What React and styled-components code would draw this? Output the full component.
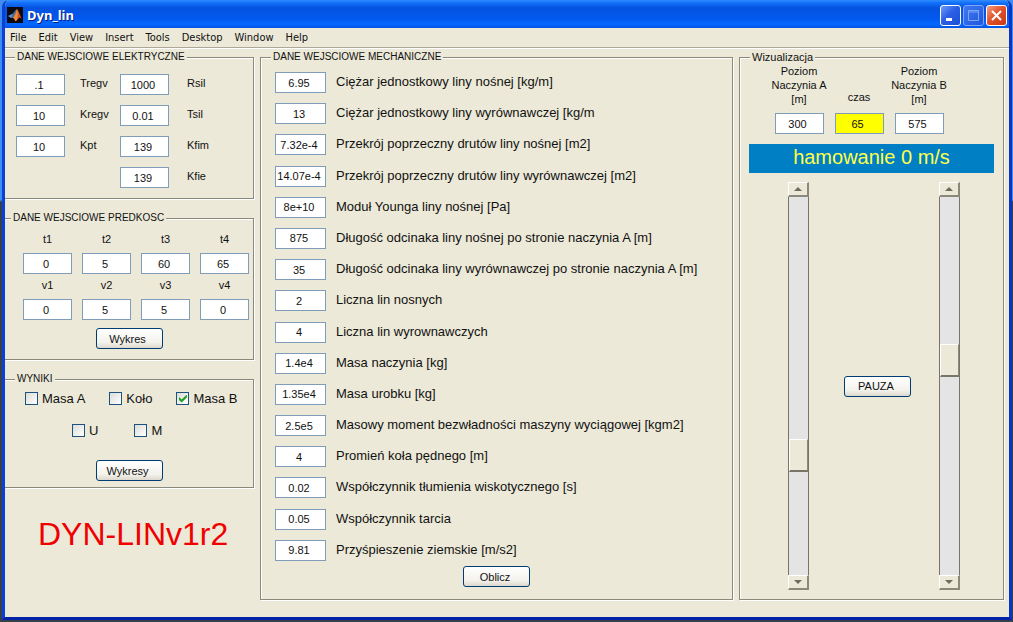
import { useState } from "react";
import styled, { createGlobalStyle, css } from "styled-components";

const GlobalStyle = createGlobalStyle`
  *,
  *::before,
  *::after {
    box-sizing: border-box;
  }

  body {
    margin: 0;
    font-family: "Liberation Sans", Arial, sans-serif;
    font-size: 11px;
    color: #111;
  }

  button,
  input {
    font: inherit;
    color: inherit;
  }
`;

const Desktop = styled.div`
  min-height: 100vh;
  display: flex;
  padding: 0 1px 2px 2px;
  background: linear-gradient(to bottom, #3f8df0 0, #3f8df0 200px, #35404a 202px);
`;

const Window = styled.main`
  flex: 1;
  min-width: 0;
  display: flex;
  flex-direction: column;
  border: solid #0a3fd8;
  border-width: 0 3px 3px;
  border-bottom-color: #0322a8;
  border-right-color: #0a34c4;
  border-radius: 7px 7px 0 0;
  background-color: #ece9d8;
  overflow: hidden;
`;

/* title bar */
const TitleBar = styled.header`
  display: flex;
  align-items: center;
  gap: 4px;
  height: 28px;
  padding: 2px 3px 0;
  margin: 0 -1px;
  color: #fff;
  background: linear-gradient(
    to bottom,
    #2f8cff 0,
    #1270f8 3px,
    #0553e0 8px,
    #0258ee 18px,
    #0468fd 24px,
    #0354e6 28px
  );
`;

const Title = styled.h1`
  flex: 1;
  margin: 0;
  font: bold 13px/16px "Noto Sans", "Open Sans", sans-serif;
  text-shadow: 1px 1px #0a1f7c;
`;

const CaptionButtons = styled.div`
  display: flex;
  gap: 2px;
`;

const CaptionButton = styled.button`
  display: grid;
  place-items: center;
  width: 21px;
  height: 21px;
  padding: 0;
  border: 1px solid #fff;
  border-radius: 3px;
  background: linear-gradient(135deg, #6f9cf8, #2a5fe6 45%, #1c4fd6);

  ${(props) =>
    props.$kind === "close" &&
    css`
      background: linear-gradient(135deg, #f2a183, #e1532c 45%, #c93a14);
    `}

  &:disabled {
    border-color: #7fa5f5;
    background: linear-gradient(135deg, #3f78f0, #1f58e2);
  }
`;

/* menu */
const MenuBar = styled.nav`
  display: flex;
  gap: 12px;
  height: 20px;
  padding: 0 5px;
  border-bottom: 1px solid #aca899;
  box-shadow: 0 1px #fff;
`;

const MenuItem = styled.button`
  padding: 0;
  border: 0;
  background: none;
  font: 11px/18px "DejaVu Sans Condensed", "DejaVu Sans", sans-serif;
`;

/* panels */
const Content = styled.div`
  flex: 1;
  display: grid;
  grid-template-columns: 249fr 473fr 265fr;
  gap: 6px;
  padding: 3px 5px 17px 0;
`;

const Column = styled.div`
  display: flex;
  flex-direction: column;
  gap: 13px;
  min-width: 0;
`;

const Panel = styled.fieldset`
  display: flex;
  flex-direction: column;
  min-width: 0;
  margin: 0;
  padding: ${(props) => props.$padding};
  border: 1px solid #8b887c;
  border-left-width: ${(props) => (props.$openLeft ? "0" : "1px")};
  box-shadow:
    inset ${(props) => (props.$openLeft ? "0" : "1px")} 1px #fff,
    1px 1px #fff;
`;

const Legend = styled.legend`
  margin-left: ${(props) => props.$shift || 0};
  padding: 0 2px;
  font-size: ${(props) => (props.$large ? "11px" : "10px")};
  line-height: 12px;
  background-color: #ece9d8;
`;

/* controls */
const TextBox = styled.input`
  width: ${(props) => (props.$wide ? "51px" : "49px")};
  height: 21px;
  flex-shrink: 0;
  padding: 0 3px 0 0;
  border: 1px solid #7f9db9;
  border-radius: 0;
  background-color: ${(props) => (props.$highlight ? "#ffff00" : "#fff")};
  text-align: center;
`;

const PushButton = styled.button`
  width: 67px;
  height: 21px;
  padding: 0 3px 0 0;
  border: 1px solid #003c74;
  border-radius: 3px;
  background: linear-gradient(to bottom, #fff, #f3f2ec 70%, #dcd8cc);
  align-self: center;
  justify-self: end;
`;

const FieldColumns = styled.div`
  display: flex;
  gap: 11px;
`;

const FieldColumn = styled.div`
  display: flex;
  flex-direction: column;
  gap: 10px;
`;

const SideField = styled.label`
  display: grid;
  grid-template-columns: 49px 29px;
  column-gap: ${(props) => props.$gap};
  line-height: 19px;
`;

const SpeedGrid = styled.div`
  display: grid;
  grid-template-columns: repeat(4, 49px);
  gap: 4px 10px;
  padding-left: 18px;
  margin-bottom: 8px;
`;

const TopField = styled.label`
  display: flex;
  flex-direction: column;
  justify-content: flex-end;
  align-items: center;
  gap: ${(props) => props.$gap || "7px"};
  line-height: 14px;
  text-align: center;
`;

const MechList = styled.div`
  flex: 1;
  display: flex;
  flex-direction: column;
  justify-content: space-between;
  padding-left: 14px;
  margin-bottom: 5px;
`;

const MechField = styled.label`
  display: flex;
  gap: 10px;
  font-size: 13px;
  line-height: 19px;
  white-space: nowrap;

  input {
    font-size: 11px;
  }
`;

const CheckRow = styled.div`
  display: flex;
  gap: ${(props) => props.$gap};
  padding-left: ${(props) => props.$inset};
  margin-bottom: 18px;

  &:last-of-type {
    margin-bottom: 22px;
  }
`;

const CheckLabel = styled.label`
  display: flex;
  gap: 4px;
  font-size: 13px;
  line-height: 14px;
`;

const CheckInput = styled.input`
  appearance: none;
  display: grid;
  place-items: center;
  width: 13px;
  height: 13px;
  margin: 0;
  border: 1px solid #1c5180;
  background: linear-gradient(135deg, #dcdcd7, #fff);

  &:checked::before {
    content: "";
    width: 9px;
    height: 8px;
    background-color: #21a121;
    clip-path: polygon(6% 32%, 36% 62%, 94% 0, 94% 36%, 36% 100%, 6% 68%);
  }
`;

const Version = styled.h2`
  margin: 0;
  padding: 14px 0 0 33px;
  font-size: 32px;
  font-weight: 400;
  line-height: 38px;
  color: #f00000;
  white-space: nowrap;
`;

/* visualisation */
const Readouts = styled.div`
  display: grid;
  grid-template-columns: repeat(3, 60px);
  padding-left: 29px;
`;

const Banner = styled.output`
  margin: 10px 9px 9px;
  font-size: 20px;
  line-height: 27px;
  height: 29px;
  text-align: center;
  color: #ffff4a;
  background-color: #007fc4;
`;

const Shaft = styled.div`
  flex: 1;
  display: grid;
  grid-template-columns: 21px 1fr 21px;
  column-gap: 28px;
  padding: 0 43px 0 48px;
`;

const ScrollBar = styled.div`
  display: flex;
  flex-direction: column;
`;

const ArrowButton = styled.button`
  display: grid;
  place-items: center;
  height: 15px;
  padding: 0;
  border: solid;
  border-width: 1px 2px 2px 1px;
  border-color: #fff #8b887c #8b887c #fff;
  background-color: #ece9d8;
`;

const Range = styled.input.attrs({ type: "range", min: 0, max: 1000 })`
  appearance: none;
  writing-mode: vertical-lr;
  direction: rtl;
  flex: 1;
  width: 21px;
  min-height: 0;
  margin: 0;
  border: solid #77746a;
  border-width: 0 1px;
  background-color: #e5e4e4;

  &::-webkit-slider-thumb {
    appearance: none;
    width: 19px;
    height: 33px;
    border: solid;
    border-width: 1px 1px 2px 1px;
    border-color: #fff #8b887c #77746a #fff;
    background-color: #ece9d8;
  }
`;

const menus = ["File", "Edit", "View", "Insert", "Tools", "Desktop", "Window", "Help"];

const regulator = [
  ["Tregv", ".1"],
  ["Kregv", "10"],
  ["Kpt", "10"],
];

const motor = [
  ["Rsil", "1000"],
  ["Tsil", "0.01"],
  ["Kfim", "139"],
  ["Kfie", "139"],
];

const speed = [
  ["t1", "0"],
  ["t2", "5"],
  ["t3", "60"],
  ["t4", "65"],
  ["v1", "0"],
  ["v2", "5"],
  ["v3", "5"],
  ["v4", "0"],
];

const mechanical = [
  ["Ciężar jednostkowy liny nośnej [kg/m]", "6.95"],
  ["Ciężar jednostkowy liny wyrównawczej [kg/m", "13"],
  ["Przekrój poprzeczny drutów liny nośnej [m2]", "7.32e-4"],
  ["Przekrój poprzeczny drutów liny wyrównawczej [m2]", "14.07e-4"],
  ["Moduł Younga liny nośnej [Pa]", "8e+10"],
  ["Długość odcinaka liny nośnej po stronie naczynia A [m]", "875"],
  ["Długość odcinaka liny wyrównawczej po stronie naczynia A [m]", "35"],
  ["Liczna lin nosnych", "2"],
  ["Liczna lin wyrownawczych", "4"],
  ["Masa naczynia [kg]", "1.4e4"],
  ["Masa urobku [kg]", "1.35e4"],
  ["Masowy moment bezwładności maszyny wyciągowej [kgm2]", "2.5e5"],
  ["Promień koła pędnego [m]", "4"],
  ["Współczynnik tłumienia wiskotycznego [s]", "0.02"],
  ["Współczynnik tarcia", "0.05"],
  ["Przyśpieszenie ziemskie [m/s2]", "9.81"],
];

function MatlabIcon() {
  return (
    <svg width="16" height="16" viewBox="0 0 16 16" aria-hidden="true">
      <rect width="16" height="16" fill="#0b0a10" />
      <path d="M1 9 L5 7 L7 9 L4 11 Z" fill="#5d9bc9" />
      <path d="M5 7 C7 6 8 3 10 2 L8 9 L6 11 L4 11 Z" fill="#4a6f9c" />
      <path d="M10 2 C12 4 13 9 15 12 C13 10 12 10 11 12 C10 13 9 14 8 14 C8 12 7 11 6 11 C8 9 9 5 10 2 Z" fill="#d9541e" />
      <path d="M10 2 C11 6 11 9 10 13 C9 14 8 14 8 14 C8 12 7 11 6 11 C8 9 9 5 10 2 Z" fill="#ee8a3a" />
    </svg>
  );
}

function Check({ label, defaultChecked }) {
  return (
    <CheckLabel>
      <CheckInput type="checkbox" defaultChecked={defaultChecked} />
      {label}
    </CheckLabel>
  );
}

function SideFields({ fields, gap }) {
  return (
    <FieldColumn>
      {fields.map(([label, value]) => (
        <SideField key={label} $gap={gap}>
          <TextBox defaultValue={value} />
          {label}
        </SideField>
      ))}
    </FieldColumn>
  );
}

function VesselSlider({ label, value, onChange }) {
  return (
    <ScrollBar>
      <ArrowButton aria-label={`${label} +`} onClick={() => onChange(Math.min(1000, value + 10))}>
        <svg width="8" height="4" viewBox="0 0 8 4">
          <path d="M0 4 L4 0 L8 4 Z" fill="#6e6b60" />
        </svg>
      </ArrowButton>
      <Range aria-label={label} value={value} onChange={(e) => onChange(Number(e.target.value))} />
      <ArrowButton aria-label={`${label} -`} onClick={() => onChange(Math.max(0, value - 10))}>
        <svg width="8" height="4" viewBox="0 0 8 4">
          <path d="M0 0 L8 0 L4 4 Z" fill="#6e6b60" />
        </svg>
      </ArrowButton>
    </ScrollBar>
  );
}

function Visualisation() {
  const [levelA, setLevelA] = useState(300);
  const [levelB, setLevelB] = useState(575);

  return (
    <Panel $padding="1px 0 9px">
      <Legend $large $shift="10px">
        Wizualizacja
      </Legend>
      <Readouts>
        <TopField>
          <span>
            Poziom
            <br />
            Naczynia A
            <br />
            [m]
          </span>
          <TextBox value={levelA} onChange={(e) => setLevelA(Number(e.target.value) || 0)} />
        </TopField>
        <TopField $gap="9px">
          czas
          <TextBox $highlight defaultValue="65" />
        </TopField>
        <TopField>
          <span>
            Poziom
            <br />
            Naczynia B
            <br />
            [m]
          </span>
          <TextBox value={levelB} onChange={(e) => setLevelB(Number(e.target.value) || 0)} />
        </TopField>
      </Readouts>
      <Banner>hamowanie 0 m/s</Banner>
      <Shaft>
        <VesselSlider label="Naczynie A" value={levelA} onChange={setLevelA} />
        <PushButton>PAUZA</PushButton>
        <VesselSlider label="Naczynie B" value={levelB} onChange={setLevelB} />
      </Shaft>
    </Panel>
  );
}

function App() {
  return (
    <>
      <GlobalStyle />
      <Desktop>
        <Window>
          <TitleBar>
            <MatlabIcon />
            <Title>Dyn_lin</Title>
            <CaptionButtons>
              <CaptionButton aria-label="Minimize">
                <svg width="15" height="15" viewBox="0 0 15 15">
                  <path d="M3 10 H9 V13 H3 Z" fill="#fff" />
                </svg>
              </CaptionButton>
              <CaptionButton aria-label="Maximize" disabled>
                <svg width="15" height="15" viewBox="0 0 15 15" fill="none" stroke="#7fa5f5">
                  <path d="M2.5 2.5 H12.5 V12.5 H2.5 Z M2.5 4 H12.5" />
                </svg>
              </CaptionButton>
              <CaptionButton aria-label="Close" $kind="close">
                <svg width="15" height="15" viewBox="0 0 15 15" stroke="#fff" strokeWidth="2">
                  <path d="M3 3 L12 12 M12 3 L3 12" />
                </svg>
              </CaptionButton>
            </CaptionButtons>
          </TitleBar>

          <MenuBar>
            {menus.map((name) => (
              <MenuItem key={name}>{name}</MenuItem>
            ))}
          </MenuBar>

          <Content>
            <Column>
              <Panel $openLeft $padding="11px 0 10px 11px">
                <Legend $shift="-1px">DANE WEJSCIOWE ELEKTRYCZNE</Legend>
                <FieldColumns>
                  <SideFields fields={regulator} gap="15px" />
                  <SideFields fields={motor} gap="18px" />
                </FieldColumns>
              </Panel>

              <Panel $openLeft $padding="8px 0 10px">
                <Legend $shift="6px">DANE WEJSCIOWE PREDKOSC</Legend>
                <SpeedGrid>
                  {speed.map(([label, value]) => (
                    <TopField key={label}>
                      {label}
                      <TextBox defaultValue={value} />
                    </TopField>
                  ))}
                </SpeedGrid>
                <PushButton>Wykres</PushButton>
              </Panel>

              <Panel $openLeft $padding="7px 0 6px">
                <Legend $shift="10px">WYNIKI</Legend>
                <CheckRow $gap="24px" $inset="20px">
                  <Check label="Masa A" />
                  <Check label="Koło" />
                  <Check label="Masa B" defaultChecked />
                </CheckRow>
                <CheckRow $gap="36px" $inset="67px">
                  <Check label="U" />
                  <Check label="M" />
                </CheckRow>
                <PushButton>Wykresy</PushButton>
              </Panel>

              <Version>DYN-LINv1r2</Version>
            </Column>

            <Panel $padding="9px 0 12px">
              <Legend $shift="10px">DANE WEJSCIOWE MECHANICZNE</Legend>
              <MechList>
                {mechanical.map(([label, value]) => (
                  <MechField key={label}>
                    <TextBox $wide defaultValue={value} />
                    {label}
                  </MechField>
                ))}
              </MechList>
              <PushButton>Oblicz</PushButton>
            </Panel>

            <Visualisation />
          </Content>
        </Window>
      </Desktop>
    </>
  );
}

export default App;
